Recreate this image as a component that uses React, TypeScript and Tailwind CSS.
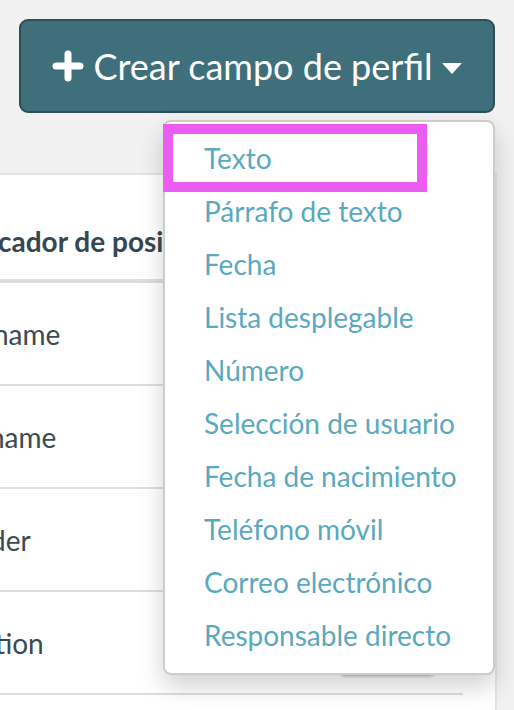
import React from "react"

const menuItems = [
  "Texto",
  "Párrafo de texto",
  "Fecha",
  "Lista desplegable",
  "Número",
  "Selección de usuario",
  "Fecha de nacimiento",
  "Teléfono móvil",
  "Correo electrónico",
  "Responsable directo",
]

const rows = [
  { label: "name", shift: "ml-[-7px]" },
  { label: "name", shift: "ml-[-11px]" },
  { label: "der", shift: "ml-[-10px]" },
  { label: "tion", shift: "ml-[-5px]" },
]

export default function App() {
  return (
    <div className="relative w-[514px] h-[710px] overflow-hidden bg-[#f1f1f1] font-['Lato',sans-serif]">
      {/* top action bar */}
      <div className="flex justify-end pt-[19px] pr-[19px]">
        <button className="w-[476px] h-[94px] rounded-[9px] border-2 border-[#2c4f57] bg-[#3f6f7a] text-white flex items-center justify-center text-[36px] leading-none">
          <svg width="32" height="32" viewBox="0 0 32 32" className="mr-[9px]">
            <path d="M16 4v24M4 16h24" stroke="white" strokeWidth="7" strokeLinecap="round" />
          </svg>
          <span>Crear campo de perfil</span>
          <svg width="20" height="11" viewBox="0 0 20 11" className="ml-[9px] mt-[4px]">
            <path d="M0 0h20L10 11z" fill="white" />
          </svg>
        </button>
      </div>

      {/* table card */}
      <div className="mt-[60px] w-[497px] h-[600px] bg-white border-t-2 border-r-2 border-[#e4e4e4]">
        <div className="w-[463px] text-[#3b4a51] text-[28px] overflow-hidden">
          <div className="h-[108px] flex items-end pb-[17px] border-b-4 border-[#dddddd] font-bold text-[#37474f] whitespace-nowrap">
            <span className="ml-[-2px]">cador de posición</span>
          </div>
          {rows.map((r, i) => (
            <div key={i} className="h-[103px] flex items-center justify-between border-b-2 border-[#dddddd]">
              <span className={r.shift}>{r.label}</span>
              <div className="mr-[26px] w-[99px] h-[66px] rounded-[8px] border-2 border-[#c8c8c8] bg-white shadow-[0_2px_0_rgba(0,0,0,0.08)]" />
            </div>
          ))}
        </div>
      </div>

      {/* dropdown menu */}
      <div className="absolute left-[163px] top-[120px] w-[332px] rounded-[8px] border-2 border-[#cccccc] bg-white pt-[9px] pb-[12px] shadow-[0_12px_24px_rgba(0,0,0,0.175)]">
        {menuItems.map((item) => (
          <div key={item} className="px-[39px] h-[53px] flex items-center text-[28px] text-[#5aa9bf] whitespace-nowrap">
            {item}
          </div>
        ))}
      </div>

      {/* highlight annotation */}
      <div className="absolute left-[163px] top-[124px] w-[264px] h-[68px] border-[10px] border-[#eb5cf1]" />
    </div>
  )
}
